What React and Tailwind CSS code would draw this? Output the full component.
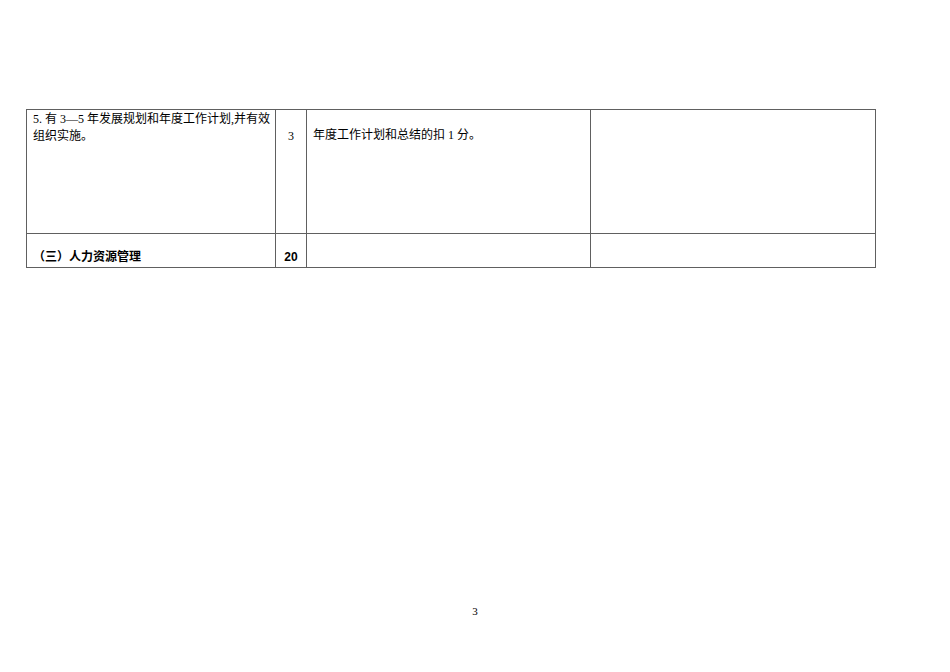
import React from 'react';

const font = { fontFamily: '"Liberation Serif", "Noto Sans CJK SC", serif' };
const sans = { fontFamily: '"Liberation Sans", "Noto Sans CJK SC", sans-serif' };

export default function App() {
  return (
    <div className="relative w-[950px] h-[672px] bg-white text-black" style={font}>
      <div className="pt-[109px] pl-[26px]">
        <table className="border-collapse w-[849px] table-fixed text-[12px] leading-[17px]">
          <colgroup>
            <col className="w-[249px]" />
            <col className="w-[31px]" />
            <col className="w-[284px]" />
            <col className="w-[285px]" />
          </colgroup>
          <tbody>
            <tr className="h-[124px]">
              <td className="border border-[#606060] align-top px-[6px] pt-[1px] whitespace-nowrap overflow-hidden">
                5. 有 3—5 年发展规划和年度工作计划,并有效
                <br />
                组织实施。
              </td>
              <td className="border border-[#606060] align-top text-center pt-[18px]">3</td>
              <td className="border border-[#606060] align-top px-[6px] pt-[17px]">
                年度工作计划和总结的扣 1 分。
              </td>
              <td className="border border-[#606060]"></td>
            </tr>
            <tr className="h-[34px]">
              <td className="border border-[#606060] align-bottom px-[6px] pb-[1px] font-bold" style={sans}>
                （三）人力资源管理
              </td>
              <td className="border border-[#606060] align-bottom text-center pb-[1px] font-bold" style={sans}>
                20
              </td>
              <td className="border border-[#606060]"></td>
              <td className="border border-[#606060]"></td>
            </tr>
          </tbody>
        </table>
      </div>
      <div className="absolute left-0 right-0 top-[603px] text-center text-[11px]">3</div>
    </div>
  );
}
